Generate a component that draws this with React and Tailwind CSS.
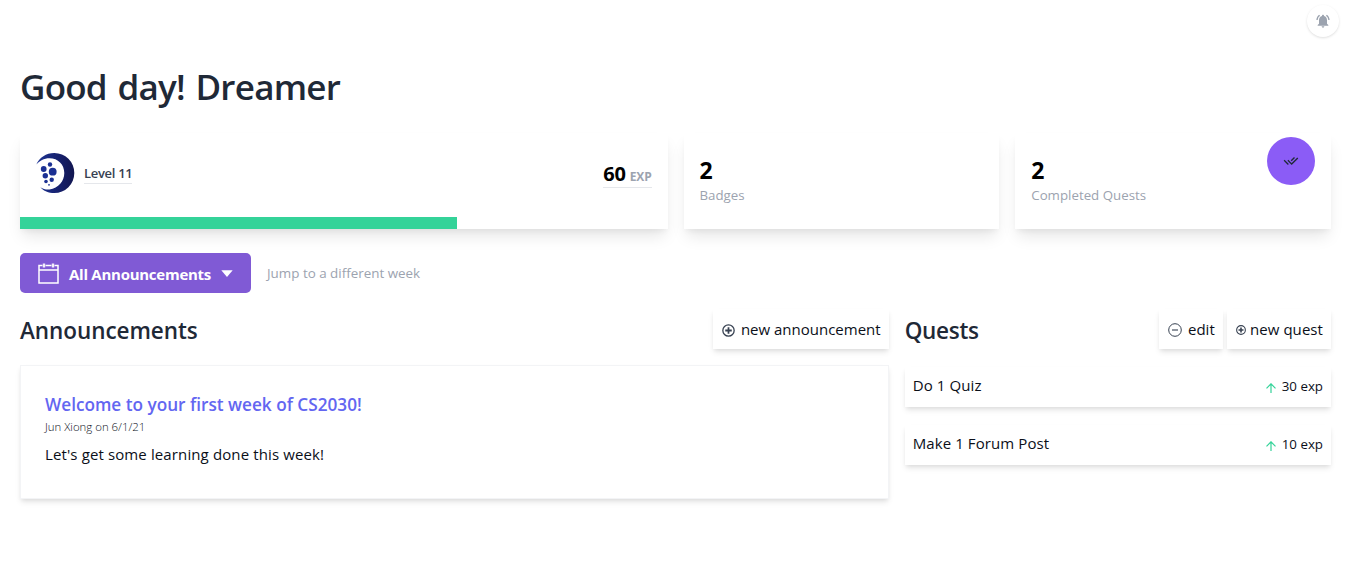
import React from "react";
import { MdNotificationsActive } from "react-icons/md";
import { RiCheckDoubleLine } from "react-icons/ri";

const cardShadow =
  "shadow-[0_10px_15px_-3px_rgba(0,0,0,0.1),0_4px_6px_-2px_rgba(0,0,0,0.05)]";
const smallShadow =
  "shadow-[0_4px_6px_-1px_rgba(0,0,0,0.1),0_2px_4px_-1px_rgba(0,0,0,0.06)]";

function Logo() {
  return (
    <svg viewBox="0 0 40 40" className="h-10 w-10">
      <defs>
        <linearGradient id="moon" x1="0" y1="0" x2="1" y2="0">
          <stop offset="0" stopColor="#1d3596" />
          <stop offset="0.6" stopColor="#16206c" />
          <stop offset="1" stopColor="#121650" />
        </linearGradient>
      </defs>
      <path
        d="M0.3 11.500C3.500 4.500 10 0 18.300 0A20 20 0 0 1 18.300 40C12.500 40 7.500 38 4.300 34.200C7.500 36.300 10.500 36.900 13.500 36.500C22.500 35.300 28.300 28 28.300 20C28.300 11.500 22 5.300 13.500 5.300C8 5.300 3.500 8 0.300 11.500Z"
        fill="url(#moon)"
      />
      <g fill="#1b3093">
        <circle cx="14" cy="11.500" r="2.200" />
        <circle cx="7.700" cy="16" r="2.900" />
        <circle cx="16.700" cy="18.700" r="3.900" />
        <circle cx="9.300" cy="22.800" r="2.700" />
        <circle cx="15.700" cy="26.800" r="2.200" />
        <circle cx="10" cy="28.500" r="1.800" />
        <circle cx="13" cy="31.800" r="0.900" />
      </g>
    </svg>
  );
}

function PlusCircle({ className, ring, inner }) {
  return (
    <svg viewBox="0 0 14 14" className={className} fill="none" stroke="currentColor">
      <circle cx="7" cy="7" r="6.100" strokeWidth={ring} />
      <path d="M7 3.500v7M3.500 7h7" strokeWidth={inner} />
    </svg>
  );
}

function MinusCircle() {
  return (
    <svg viewBox="0 0 14 14" className="mt-0.5 h-3.5 w-3.5" fill="none" stroke="#374151">
      <circle cx="7" cy="7" r="6.300" />
      <path d="M4 7h6" strokeWidth="1.400" strokeOpacity="0.8" />
    </svg>
  );
}

function Quest({ name, exp }) {
  return (
    <div className={`flex h-10 items-center justify-between bg-white px-2 ${smallShadow}`}>
      <span className="-mt-1 text-[15px] leading-6 tracking-[0.1px]">{name}</span>
      <span className="-mt-0.5 flex items-center gap-1.5 text-[13.3px] leading-5">
        <svg viewBox="0 0 10 10" className="mt-1 h-[10px] w-[10px]" fill="none" stroke="#34d399" strokeWidth="1.200">
          <path d="M5 10V1M0.500 5.300L5 0.800L9.500 5.300" />
        </svg>
        {exp} exp
      </span>
    </div>
  );
}

export default function App() {
  return (
    <div className="h-[574px] overflow-hidden bg-white pl-5 pr-[19px] font-['Open_Sans','Noto_Sans',sans-serif] text-[#0b0f19]">
      <header className="-mr-2 flex h-[60px] justify-end pt-[5px]">
        <button className="flex h-8 w-8 items-center justify-center rounded-full bg-white text-[#9ca3af] shadow-[0_1px_3px_0_rgba(0,0,0,0.1),0_1px_2px_0_rgba(0,0,0,0.03)]">
          <MdNotificationsActive size={16} />
        </button>
      </header>

      <h1 className="flex h-[73px] items-start pt-1 text-[35px] font-semibold leading-[46px] tracking-[-0.75px] text-[#1f2937]">
        <span className="[word-spacing:2.2px]">Good day! Dreamer</span>
      </h1>

      <section className="grid h-24 grid-cols-4 gap-4">
        <div className={`col-span-2 flex flex-col justify-between bg-white ${cardShadow}`}>
          <div className="flex items-center justify-between px-4 pt-5">
            <div className="flex items-center gap-2">
              <Logo />
              <span className="mt-px border-b border-gray-200 text-[13px] font-semibold leading-5 tracking-[-0.3px] text-[#374151]">
                Level 11
              </span>
            </div>
            <div className="mt-0.5 flex items-baseline gap-1 border-b border-gray-200 font-bold leading-7 text-black">
              <span className="text-[20px] leading-[26px] tracking-[-0.2px]">60</span>
              <span className="text-xs tracking-[-0.2px] text-[#9ca3af]">EXP</span>
            </div>
          </div>
          <div className="h-3 w-[67.5%] bg-[#34d399]" />
        </div>
        <div className={`bg-white px-4 pt-[21px] ${cardShadow}`}>
          <div className="text-[23px] font-bold leading-8 text-black">2</div>
          <div className="text-[13.3px] leading-[18px] text-[#9ca3af]">Badges</div>
        </div>
        <div className={`flex justify-between bg-white px-4 ${cardShadow}`}>
          <div className="pt-[21px]">
            <div className="text-[23px] font-bold leading-8 text-black">2</div>
            <div className="text-[13.3px] leading-[18px] text-[#9ca3af]">Completed Quests</div>
          </div>
          <div className="mt-1 flex h-12 w-12 items-center justify-center rounded-full bg-[#8b5cf6] text-[#1f2937]">
            <RiCheckDoubleLine size={16} />
          </div>
        </div>
      </section>

      <section className="mt-6 flex items-center gap-4">
        <button className="flex h-10 w-[231px] items-center rounded-[5px] bg-[#805ad5] pl-[18px] text-white">
          <svg viewBox="0 0 21 21" className="h-[21px] w-[21px]" fill="none" stroke="white">
            <path d="M4.500 2.500H1V20H20V2.500H16.500M7.500 2.500h6M1 7h19" strokeWidth="1.500" />
            <path d="M6 0.500v4M15 0.500v4" strokeWidth="2.400" strokeOpacity="0.9" />
          </svg>
          <span className="ml-2.5 mt-0.5 text-[15px] font-bold tracking-[-0.26px]">All Announcements</span>
          <svg viewBox="0 0 12 7" className="ml-2.5 h-[7px] w-3" fill="white">
            <path d="M0.300 0.200h11.400L6 6.900Z" />
          </svg>
        </button>
        <span className="-mt-px text-[13.4px] leading-5 text-[#9ca3af]">Jump to a different week</span>
      </section>

      <section className="mt-4 grid grid-cols-3 gap-4">
        <div className="col-span-2">
          <div className="flex h-10 items-center justify-between">
            <h2 className="mt-1 text-[22.5px] font-semibold leading-8 tracking-[-0.06px] text-[#1f2937]">Announcements</h2>
            <button className={`flex h-10 items-center gap-1.5 bg-white px-2 ${smallShadow}`}>
              <PlusCircle className="ml-px mt-0.5 h-[13px] w-[13px] text-[#374151]" ring="1.400" inner="1.900" />
              <span className="text-[15px] leading-6">new announcement</span>
            </button>
          </div>
          <article className={`mt-4 h-[134px] border border-gray-100 bg-white px-6 pt-[25px] ${smallShadow}`}>
            <h3 className="text-[17.2px] font-semibold leading-7 text-[#6366f1]">
              Welcome to your first week of CS2030!
            </h3>
            <p className="text-[11.4px] font-light leading-4">Jun Xiong on 6/1/21</p>
            <p className="mt-[7px] text-[15px] leading-6 tracking-[0.12px]">Let's get some learning done this week!</p>
          </article>
        </div>
        <div>
          <div className="flex h-10 items-center justify-between">
            <h2 className="mt-1 text-[22.5px] font-semibold leading-8 tracking-[-0.3px] text-[#1f2937]">Quests</h2>
            <div className="flex gap-1">
              <button className={`flex h-10 w-16 items-center gap-1.5 bg-white pl-[9px] ${smallShadow}`}>
                <MinusCircle />
                <span className="text-[15px] leading-6">edit</span>
              </button>
              <button className={`flex h-10 w-[104px] items-center gap-1 bg-white pl-[9px] ${smallShadow}`}>
                <PlusCircle className="mt-0.5 h-2.5 w-2.5 text-[#374151]" ring="1.500" inner="2.200" />
                <span className="text-[15px] leading-6 tracking-[0.06px]">new quest</span>
              </button>
            </div>
          </div>
          <div className="mt-[18px] flex flex-col gap-[18px]">
            <Quest name="Do 1 Quiz" exp={30} />
            <Quest name="Make 1 Forum Post" exp={10} />
          </div>
        </div>
      </section>
    </div>
  );
}
